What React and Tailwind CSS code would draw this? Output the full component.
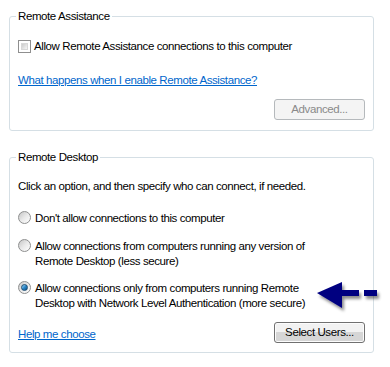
import React from 'react';

const font = { fontFamily: '"Liberation Sans", Arial, sans-serif' };

function Checkbox() {
    return (
        <span className="inline-block w-[13px] h-[13px] shrink-0 border border-[#8f8f8f] bg-white p-[2px]">
            <span className="block w-full h-full bg-gradient-to-br from-[#cbcbcb] to-[#f6f6f6] border border-[#d8d8d8]" />
        </span>
    );
}

function Radio({ checked }) {
    return (
        <span className="relative inline-flex items-center justify-center w-[13px] h-[13px] shrink-0 rounded-full border border-[#8e8f8f] bg-gradient-to-br from-[#c6c6c6] via-[#e9e9e9] to-[#ffffff]">
            {checked && (
                <span className="w-[7px] h-[7px] rounded-full border border-[#1b4c72] bg-gradient-to-br from-[#9fdcf9] via-[#2b87c9] to-[#0d4e83]" />
            )}
        </span>
    );
}

function Button({ children, disabled }) {
    return disabled ? (
        <button className="w-[91px] h-[21px] rounded-[3px] border border-[#b5b9bc] bg-[#f4f4f4] text-[#8a8a8a] leading-none">
            {children}
        </button>
    ) : (
        <button className="w-[91px] h-[21px] rounded-[3px] border border-[#707070] bg-gradient-to-b from-[#f2f2f2] from-50% to-[#d6d6d6] to-50% text-black leading-none shadow-[inset_0_0_0_1px_#fcfcfc]">
            {children}
        </button>
    );
}

function Arrow() {
    return (
        <svg className="absolute left-[315px] top-[280px]" width="72" height="34" viewBox="0 0 72 34">
            <defs>
                <filter id="sh" x="-20%" y="-20%" width="150%" height="160%">
                    <feDropShadow dx="2" dy="3" stdDeviation="1.6" floodColor="#000" floodOpacity="0.45" />
                </filter>
            </defs>
            <g filter="url(#sh)" fill="#000080">
                <polygon points="2,13 27,2 27,28" />
                <rect x="26" y="10" width="18" height="6" />
                <rect x="49" y="10" width="13" height="6" />
            </g>
        </svg>
    );
}

export default function App() {
    return (
        <div className="relative w-[390px] h-[367px] bg-white text-black text-[11.5px] tracking-[-0.4px] leading-[14px] pt-[9px]" style={font}>
            {/* Remote Assistance group */}
            <fieldset className="ml-[9px] w-[365px] border border-[#d5dfe5] rounded-[3px] pb-[10px]">
                <legend className="ml-[6px] px-[2px]">Remote Assistance</legend>
                <div className="px-[8px]">
                    <label className="flex items-center gap-[3px] mt-[16px]">
                        <Checkbox />
                        <span>Allow Remote Assistance connections to this computer</span>
                    </label>
                    <a href="#" className="block mt-[20px] text-[#0066cc] underline w-fit">What happens when I enable Remote Assistance?</a>
                    <div className="flex justify-end mt-[12px]">
                        <Button disabled>Advanced...</Button>
                    </div>
                </div>
            </fieldset>

            {/* Remote Desktop group */}
            <fieldset className="ml-[9px] mt-[19px] w-[365px] border border-[#d5dfe5] rounded-[3px] pb-[9px]">
                <legend className="ml-[6px] px-[2px]">Remote Desktop</legend>
                <div className="px-[8px]">
                    <p className="mt-[15px]">Click an option, and then specify who can connect, if needed.</p>
                    <label className="flex items-start gap-[4px] mt-[18px]">
                        <Radio />
                        <span>Don't allow connections to this computer</span>
                    </label>
                    <label className="flex items-start gap-[4px] mt-[14px] leading-[15px]">
                        <Radio />
                        <span>Allow connections from computers running any version of<br />Remote Desktop (less secure)</span>
                    </label>
                    <label className="flex items-start gap-[4px] mt-[12px] leading-[15px]">
                        <Radio checked />
                        <span>Allow connections only from computers running Remote<br />Desktop with Network Level Authentication (more secure)</span>
                    </label>
                    <div className="flex items-center justify-between mt-[11px]">
                        <a href="#" className="text-[#0066cc] underline mt-[2px]">Help me choose</a>
                        <Button>Select Users...</Button>
                    </div>
                </div>
            </fieldset>

            <Arrow />
        </div>
    );
}
